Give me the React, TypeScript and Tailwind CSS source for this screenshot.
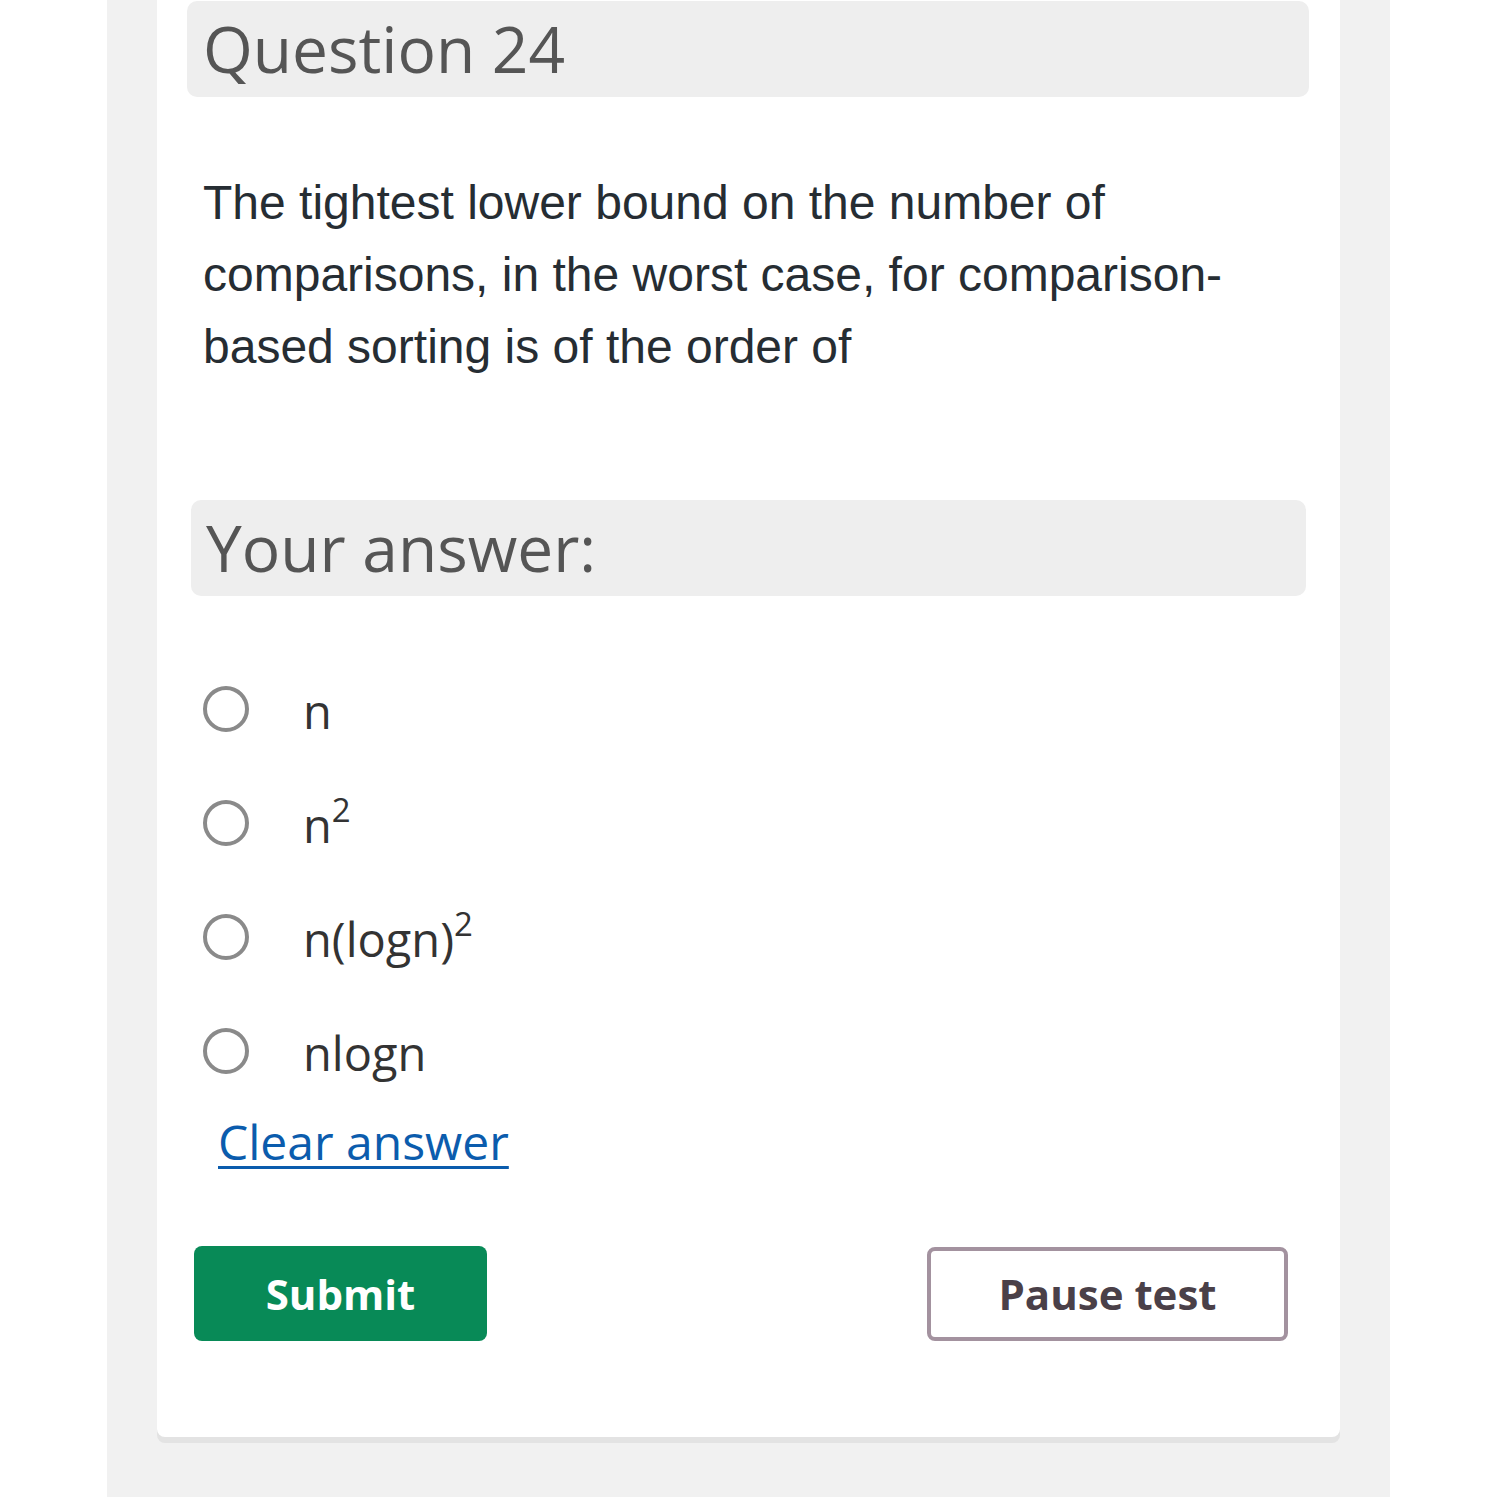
import React from "react";

const Radio = () => (
  <span className="block w-[46px] h-[46px] rounded-full border-[4px] border-[#8a8a8a] bg-white shrink-0" />
);

const Sup = ({ children }: { children: React.ReactNode }) => (
  <sup className="text-[33px] top-[-0.62em]">{children}</sup>
);

export default function App() {
  const options: React.ReactNode[] = [
    <>n</>,
    <>
      n<Sup>2</Sup>
    </>,
    <>
      n(logn)<Sup>2</Sup>
    </>,
    <>nlogn</>,
  ];
  return (
    <div className="w-[1497px] h-[1497px] bg-white overflow-hidden">
      <div className="ml-[107px] w-[1283px] h-[1497px] bg-[#f1f1f1] px-[50px]">
        <div className="bg-white rounded-b-[8px] shadow-[0_6px_0_0_#e3e3e3] pt-[1px] pl-[30px] pr-[31px] pb-[96px]">
          <div
            className="h-[96px] bg-[#eeeeee] rounded-[10px] pl-[16px] flex items-center text-[#555555] text-[64px] leading-none"
            style={{ fontFamily: '"Open Sans", sans-serif' }}
          >
            Question 24
          </div>
          <p
            className="mt-[70px] pl-[16px] text-[#262d33] text-[48px] leading-[72px]"
            style={{ fontFamily: '"Liberation Sans", Arial, sans-serif' }}
          >
            The tightest lower bound on the number of comparisons, in the worst case, for comparison-based sorting is of the order of
          </p>
          <div
            className="mt-[117px] ml-[4px] mr-[3px] h-[96px] bg-[#eeeeee] rounded-[10px] pl-[15px] flex items-center text-[#555555] text-[64px] leading-none"
            style={{ fontFamily: '"Open Sans", sans-serif' }}
          >
            Your answer:
          </div>
          <div
            className="mt-[90px] flex flex-col gap-[68px] pl-[16px]"
            style={{ fontFamily: '"Open Sans", sans-serif' }}
          >
            {options.map((o, i) => (
              <div key={i} className="flex items-center h-[46px]">
                <Radio />
                <span className="ml-[54px] pt-[4px] text-[47px] leading-none text-[#333333]">
                  {o}
                </span>
              </div>
            ))}
          </div>
          <div
            className="mt-[38px] pl-[31px]"
            style={{ fontFamily: '"Open Sans", sans-serif' }}
          >
            <a
              href="#"
              className="text-[48px] leading-[60px] text-[#0b5cad] underline underline-offset-[6px] decoration-[3px]"
            >
              Clear answer
            </a>
          </div>
          <div
            className="mt-[74px] flex justify-between items-center pl-[7px] pr-[21px]"
            style={{ fontFamily: '"Open Sans", sans-serif' }}
          >
            <button className="w-[293px] h-[95px] rounded-[8px] bg-[#088a57] text-white text-[42px] font-bold">
              Submit
            </button>
            <button className="w-[361px] h-[94px] rounded-[8px] border-[4px] border-[#a3929f] bg-white text-[#4a4048] text-[42px] font-bold">
              Pause test
            </button>
          </div>
        </div>
      </div>
    </div>
  );
}
